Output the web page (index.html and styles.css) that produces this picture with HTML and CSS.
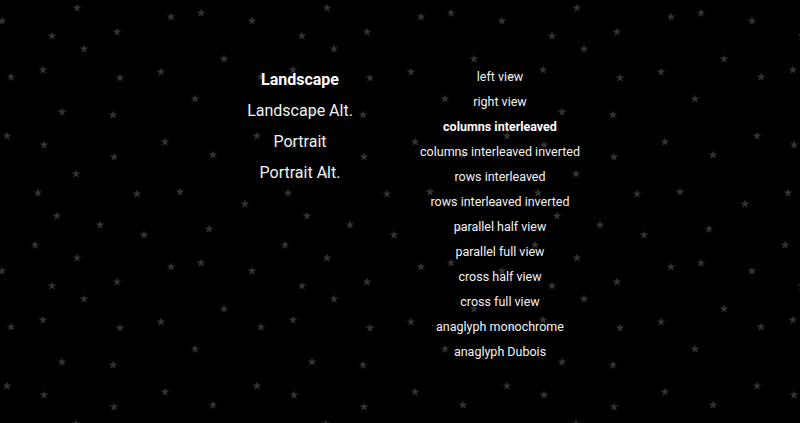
FILE: index.html
```html
<!DOCTYPE html>
<html lang="en">
<head>
<meta charset="utf-8">
<title>3D View Settings</title>
<link rel="stylesheet" href="styles.css">
</head>
<body>
<main class="menu">
  <ul class="col col-orient">
    <li class="item is-active">Landscape</li>
    <li class="item">Landscape Alt.</li>
    <li class="item">Portrait</li>
    <li class="item">Portrait Alt.</li>
  </ul>
  <ul class="col col-mode">
    <li class="item">left view</li>
    <li class="item">right view</li>
    <li class="item is-active">columns interleaved</li>
    <li class="item">columns interleaved inverted</li>
    <li class="item">rows interleaved</li>
    <li class="item">rows interleaved inverted</li>
    <li class="item">parallel half view</li>
    <li class="item">parallel full view</li>
    <li class="item">cross half view</li>
    <li class="item">cross full view</li>
    <li class="item">anaglyph monochrome</li>
    <li class="item">anaglyph Dubois</li>
  </ul>
</main>
</body>
</html>
```
FILE: styles.css
```css
html {
  background-color: #000;
  background-image: url("data:image/svg+xml,%3Csvg xmlns='http://www.w3.org/2000/svg' width='250' height='250' viewBox='0 0 250 250'%3E%3Cdefs%3E%3Cpath id='s' d='M0-4.6L1.08-1.49 4.37-1.42 1.75.57 2.7 3.72 0 1.84-2.7 3.72-1.75.57-4.37-1.42-1.08-1.49Z'/%3E%3C/defs%3E%3Cg fill='%23333333'%3E%3Cuse href='%23s' x='77' y='8'/%3E%3Cuse href='%23s' x='2' y='21'/%3E%3Cuse href='%23s' x='252' y='21'/%3E%3Cuse href='%23s' x='171' y='17'/%3E%3Cuse href='%23s' x='201' y='13'/%3E%3Cuse href='%23s' x='52' y='36'/%3E%3Cuse href='%23s' x='117' y='32'/%3E%3Cuse href='%23s' x='84' y='49'/%3E%3Cuse href='%23s' x='224' y='59'/%3E%3Cuse href='%23s' x='43' y='70'/%3E%3Cuse href='%23s' x='11' y='77'/%3E%3Cuse href='%23s' x='120' y='78'/%3E%3Cuse href='%23s' x='161' y='72'/%3E%3Cuse href='%23s' x='195' y='99'/%3E%3Cuse href='%23s' x='62' y='112'/%3E%3Cuse href='%23s' x='113' y='115'/%3E%3Cuse href='%23s' x='7' y='136'/%3E%3Cuse href='%23s' x='44' y='145'/%3E%3Cuse href='%23s' x='165' y='142'/%3E%3Cuse href='%23s' x='114' y='157'/%3E%3Cuse href='%23s' x='213' y='155'/%3E%3Cuse href='%23s' x='76' y='174'/%3E%3Cuse href='%23s' x='38' y='193'/%3E%3Cuse href='%23s' x='137' y='194'/%3E%3Cuse href='%23s' x='180' y='192'/%3E%3Cuse href='%23s' x='245' y='204'/%3E%3Cuse href='%23s' x='-5' y='204'/%3E%3Cuse href='%23s' x='57' y='216'/%3E%3Cuse href='%23s' x='100' y='225'/%3E%3Cuse href='%23s' x='144' y='235'/%3E%3Cuse href='%23s' x='209' y='229'/%3E%3Cuse href='%23s' x='35' y='245'/%3E%3Cuse href='%23s' x='35' y='-5'/%3E%3C/g%3E%3C/svg%3E");
  background-repeat: repeat;
  background-position: 0 0;
  min-height: 100%;
}

body {
  margin: 0;
  min-height: 423px;
  font-family: Roboto, "Liberation Sans", sans-serif;
  color: #f2f2f2;
}

.menu {
  display: flex;
  justify-content: center;
  align-items: flex-start;
  padding-top: 64px;
}

.col {
  width: 200px;
  margin: 0;
  padding: 0;
  list-style: none;
  text-align: center;
}

.col-orient .item {
  font-size: 16px;
  line-height: 31px;
}

.col-mode .item {
  font-size: 12.5px;
  line-height: 25px;
}

.item.is-active {
  font-weight: 700;
  color: #fff;
}
```
